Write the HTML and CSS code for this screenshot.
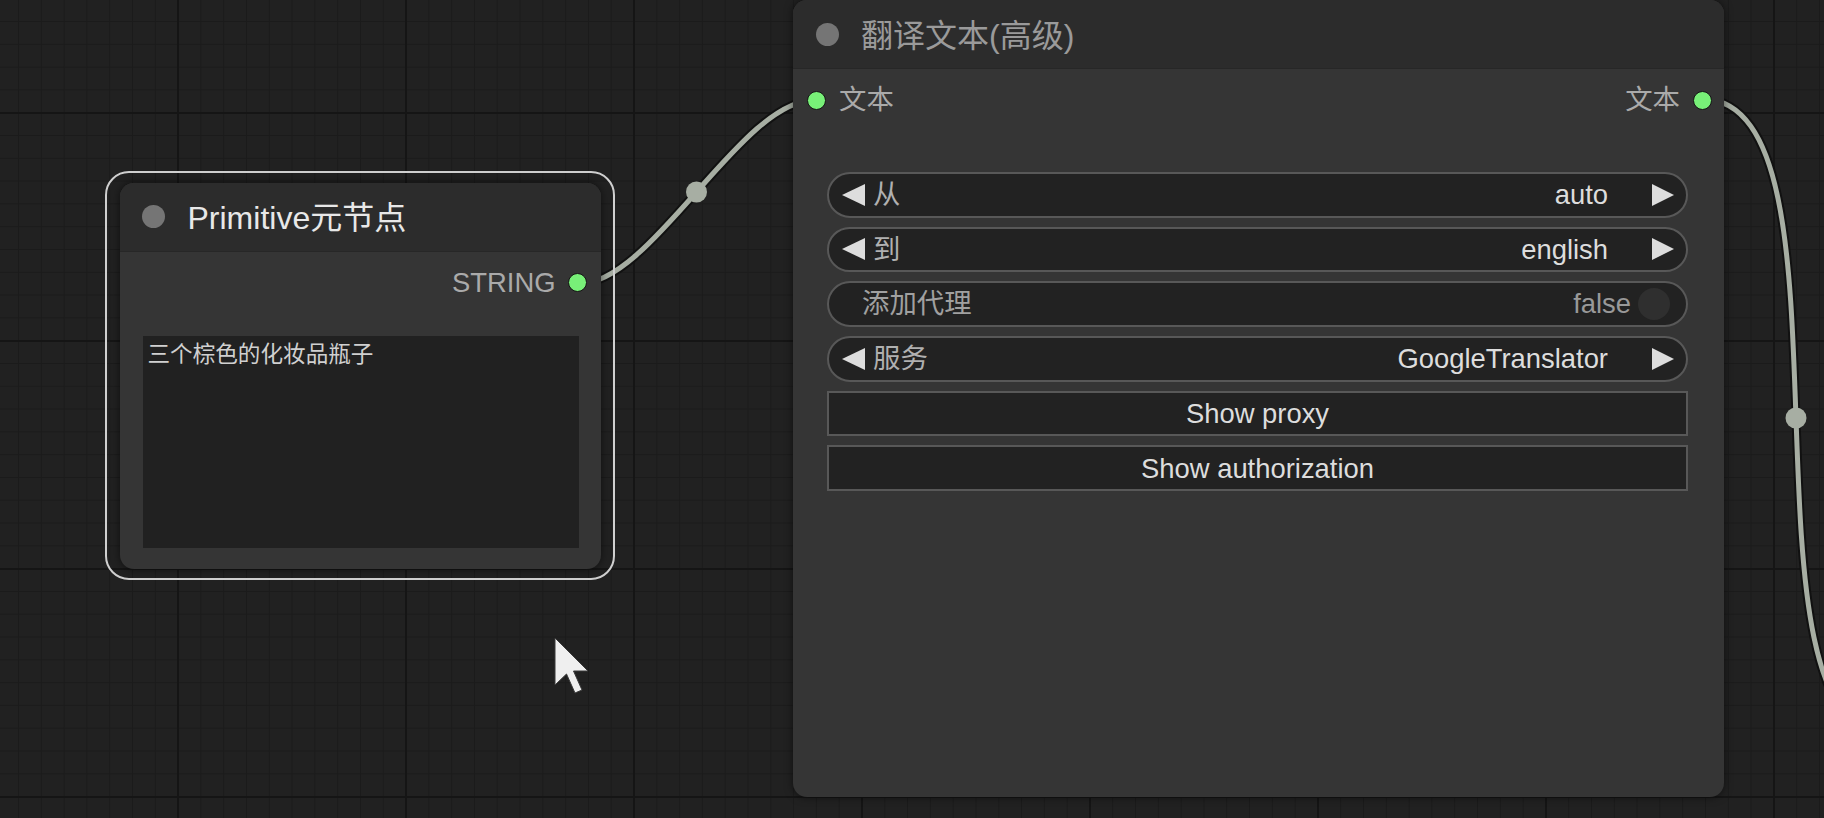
FILE: index.html
```html
<!DOCTYPE html>
<html lang="zh">
<head>
<meta charset="utf-8">
<title>ComfyUI canvas</title>
<link rel="stylesheet" href="styles.css">
</head>
<body>
<div class="canvas">
  <svg class="links" width="1824" height="818" viewBox="0 0 1824 818">
    <path class="link-outline" d="M578,284 C653,284 740,100 815,100"/>
    <path class="link-line" d="M578,284 C653,284 740,100 815,100"/>
    <circle class="link-mid" cx="696.5" cy="192" r="10.5"/>
    <path class="link-outline" d="M1702,99 C1868,99 1724,737 1890,737"/>
    <path class="link-line" d="M1702,99 C1868,99 1724,737 1890,737"/>
    <circle class="link-mid" cx="1796" cy="418" r="10.5"/>
  </svg>

  <div class="selected-frame">
    <section class="node node-primitive">
      <header class="node-title">
        <span class="title-dot"></span>
        <span class="title-text">Primitive元节点</span>
      </header>
      <div class="slots">
        <div class="slot slot-out"><span class="slot-label">STRING</span><span class="slot-dot"></span></div>
      </div>
      <div class="textarea">三个棕色的化妆品瓶子</div>
    </section>
  </div>

  <section class="node node-translate">
    <header class="node-title">
      <span class="title-dot"></span>
      <span class="title-text">翻译文本(高级)</span>
    </header>
    <div class="slots slots-pair">
      <div class="slot slot-in"><span class="slot-dot"></span><span class="slot-label">文本</span></div>
      <div class="slot slot-out"><span class="slot-label">文本</span><span class="slot-dot"></span></div>
    </div>
    <div class="widgets">
      <div class="w w-combo">
        <svg class="arrow" viewBox="0 0 23 22"><polygon points="23,0 0,11 23,22"/></svg>
        <span class="w-label">从</span>
        <span class="w-value">auto</span>
        <svg class="arrow arrow-r" viewBox="0 0 22 22"><polygon points="0,0 22,11 0,22"/></svg>
      </div>
      <div class="w w-combo">
        <svg class="arrow" viewBox="0 0 23 22"><polygon points="23,0 0,11 23,22"/></svg>
        <span class="w-label">到</span>
        <span class="w-value">english</span>
        <svg class="arrow arrow-r" viewBox="0 0 22 22"><polygon points="0,0 22,11 0,22"/></svg>
      </div>
      <div class="w w-toggle">
        <span class="w-label">添加代理</span>
        <span class="toggle-val">false</span>
        <span class="knob"></span>
      </div>
      <div class="w w-combo">
        <svg class="arrow" viewBox="0 0 23 22"><polygon points="23,0 0,11 23,22"/></svg>
        <span class="w-label">服务</span>
        <span class="w-value">GoogleTranslator</span>
        <svg class="arrow arrow-r" viewBox="0 0 22 22"><polygon points="0,0 22,11 0,22"/></svg>
      </div>
      <div class="w w-button">Show proxy</div>
      <div class="w w-button">Show authorization</div>
    </div>
  </section>

  <svg class="cursor" width="36" height="60" viewBox="0 0 36 60">
    <polygon points="1,1 1,48 12.5,37 21,56 28,53 19.5,34 34,34" />
  </svg>
</div>
</body>
</html>
```

FILE: styles.css
```css
html, body {
  margin: 0;
  padding: 0;
  background: #202020;
  overflow: hidden;
}

body {
  font-family: "Liberation Sans", "Noto Sans CJK SC", sans-serif;
}

.canvas {
  position: relative;
  width: 1824px;
  height: 818px;
  overflow: hidden;
  background-color: #212121;
  background-image:
    linear-gradient(to right, #151515 0, #151515 2.5px, transparent 2.5px),
    linear-gradient(to bottom, #151515 0, #151515 2.5px, transparent 2.5px),
    linear-gradient(to right, #1b1b1b 0, #1b1b1b 1.2px, transparent 1.2px),
    linear-gradient(to bottom, #1b1b1b 0, #1b1b1b 1.2px, transparent 1.2px);
  background-size: 228px 228px, 228px 228px, 22.8px 22.8px, 22.8px 22.8px;
  background-position: 177px 0, 0 112px, 18px 0, 0 21px;
}

/* links */
.links {
  position: absolute;
  left: 0;
  top: 0;
}

.link-outline {
  fill: none;
  stroke: #111111;
  stroke-width: 9;
}

.link-line {
  fill: none;
  stroke: #a7aea3;
  stroke-width: 5;
}

.link-mid {
  fill: #a7aea3;
}

/* selection frame */
.selected-frame {
  position: absolute;
  left: 105px;
  top: 171px;
  border: 2.5px solid #cfcfcf;
  border-radius: 24px;
  padding: 9.5px 12.5px;
}

/* nodes */
.node {
  background: #353535;
  border-radius: 14px;
  box-shadow: 0 0 8px rgba(0, 0, 0, 0.55);
  display: flex;
  flex-direction: column;
  overflow: hidden;
}

.node-primitive {
  width: 481px;
  height: 386px;
}

.node-translate {
  position: absolute;
  left: 793px;
  top: 0;
  width: 931px;
  height: 797px;
}

.node-title {
  flex: none;
  height: 69px;
  box-sizing: border-box;
  padding-top: 3px;
  background: #2c2c2c;
  border-bottom: 1px solid #272727;
  display: flex;
  align-items: center;
}

.title-dot {
  flex: none;
  width: 23px;
  height: 23px;
  border-radius: 50%;
  background: #757575;
  margin-left: 22.5px;
  margin-top: -3px;
}

.title-text {
  margin-left: 22.5px;
  font-size: 32px;
  line-height: 32px;
  color: #9a9a9a;
  white-space: nowrap;
}

.node-primitive .title-text {
  color: #e8e8e8;
}

/* slots */
.slots {
  flex: none;
  padding-top: 8px;
}

.slots-pair {
  display: flex;
  justify-content: space-between;
}

.slot {
  height: 46px;
  display: flex;
  align-items: center;
  font-size: 27.4px;
  line-height: 1;
  color: #aaaaaa;
  white-space: nowrap;
}

.slot-out {
  justify-content: flex-end;
  padding-right: 13.5px;
  gap: 12.5px;
}

.node-translate .slot-out {
  padding-right: 12.5px;
}

.slot-in {
  padding-left: 13.5px;
  gap: 13.5px;
}

.slot-dot {
  flex: none;
  width: 19px;
  height: 19px;
  box-sizing: border-box;
  border-radius: 50%;
  background: #78f078;
  border: 1.5px solid #151515;
}

/* textarea */
.textarea {
  flex: none;
  margin: 30px 22px 0 23px;
  height: 212px;
  box-sizing: border-box;
  padding: 3px 5px;
  background: #212121;
  color: #d0d0d0;
  font-family: "Noto Sans CJK SC", sans-serif;
  font-size: 22.6px;
  line-height: 1.2;
}

/* widgets */
.widgets {
  margin-top: 49px;
  padding: 0 36px 0 34px;
  display: flex;
  flex-direction: column;
  gap: 9.1px;
}

.w {
  height: 45.6px;
  box-sizing: border-box;
  border: 2px solid #585858;
  background: #222222;
  display: flex;
  align-items: center;
  font-size: 27.4px;
  line-height: 1;
  color: #dddddd;
  white-space: nowrap;
}

.w-combo,
.w-toggle {
  border-radius: 23px;
}

.w-combo {
  padding: 0 12px 0 13px;
}

.arrow {
  flex: none;
  width: 23px;
  height: 22px;
  fill: #dddddd;
}

.arrow-r {
  width: 22px;
}

.w-label {
  color: #b0b0b0;
  margin-left: 8px;
}

.w-value {
  margin-left: auto;
  margin-right: 44px;
}

.w-toggle {
  padding: 0 16px 0 33px;
}

.w-toggle .w-label {
  margin-left: 0;
  color: #a0a0a0;
}

.toggle-val {
  margin-left: auto;
  margin-right: 7px;
  color: #999999;
}

.knob {
  flex: none;
  width: 32px;
  height: 32px;
  border-radius: 50%;
  background: #2f2f2f;
}

.w-button {
  justify-content: center;
}

/* mouse pointer overlay */
.cursor {
  position: absolute;
  left: 554px;
  top: 637px;
}

.cursor polygon {
  fill: #efefef;
  stroke: #3a3a3a;
  stroke-width: 1;
  stroke-linejoin: round;
}
```
